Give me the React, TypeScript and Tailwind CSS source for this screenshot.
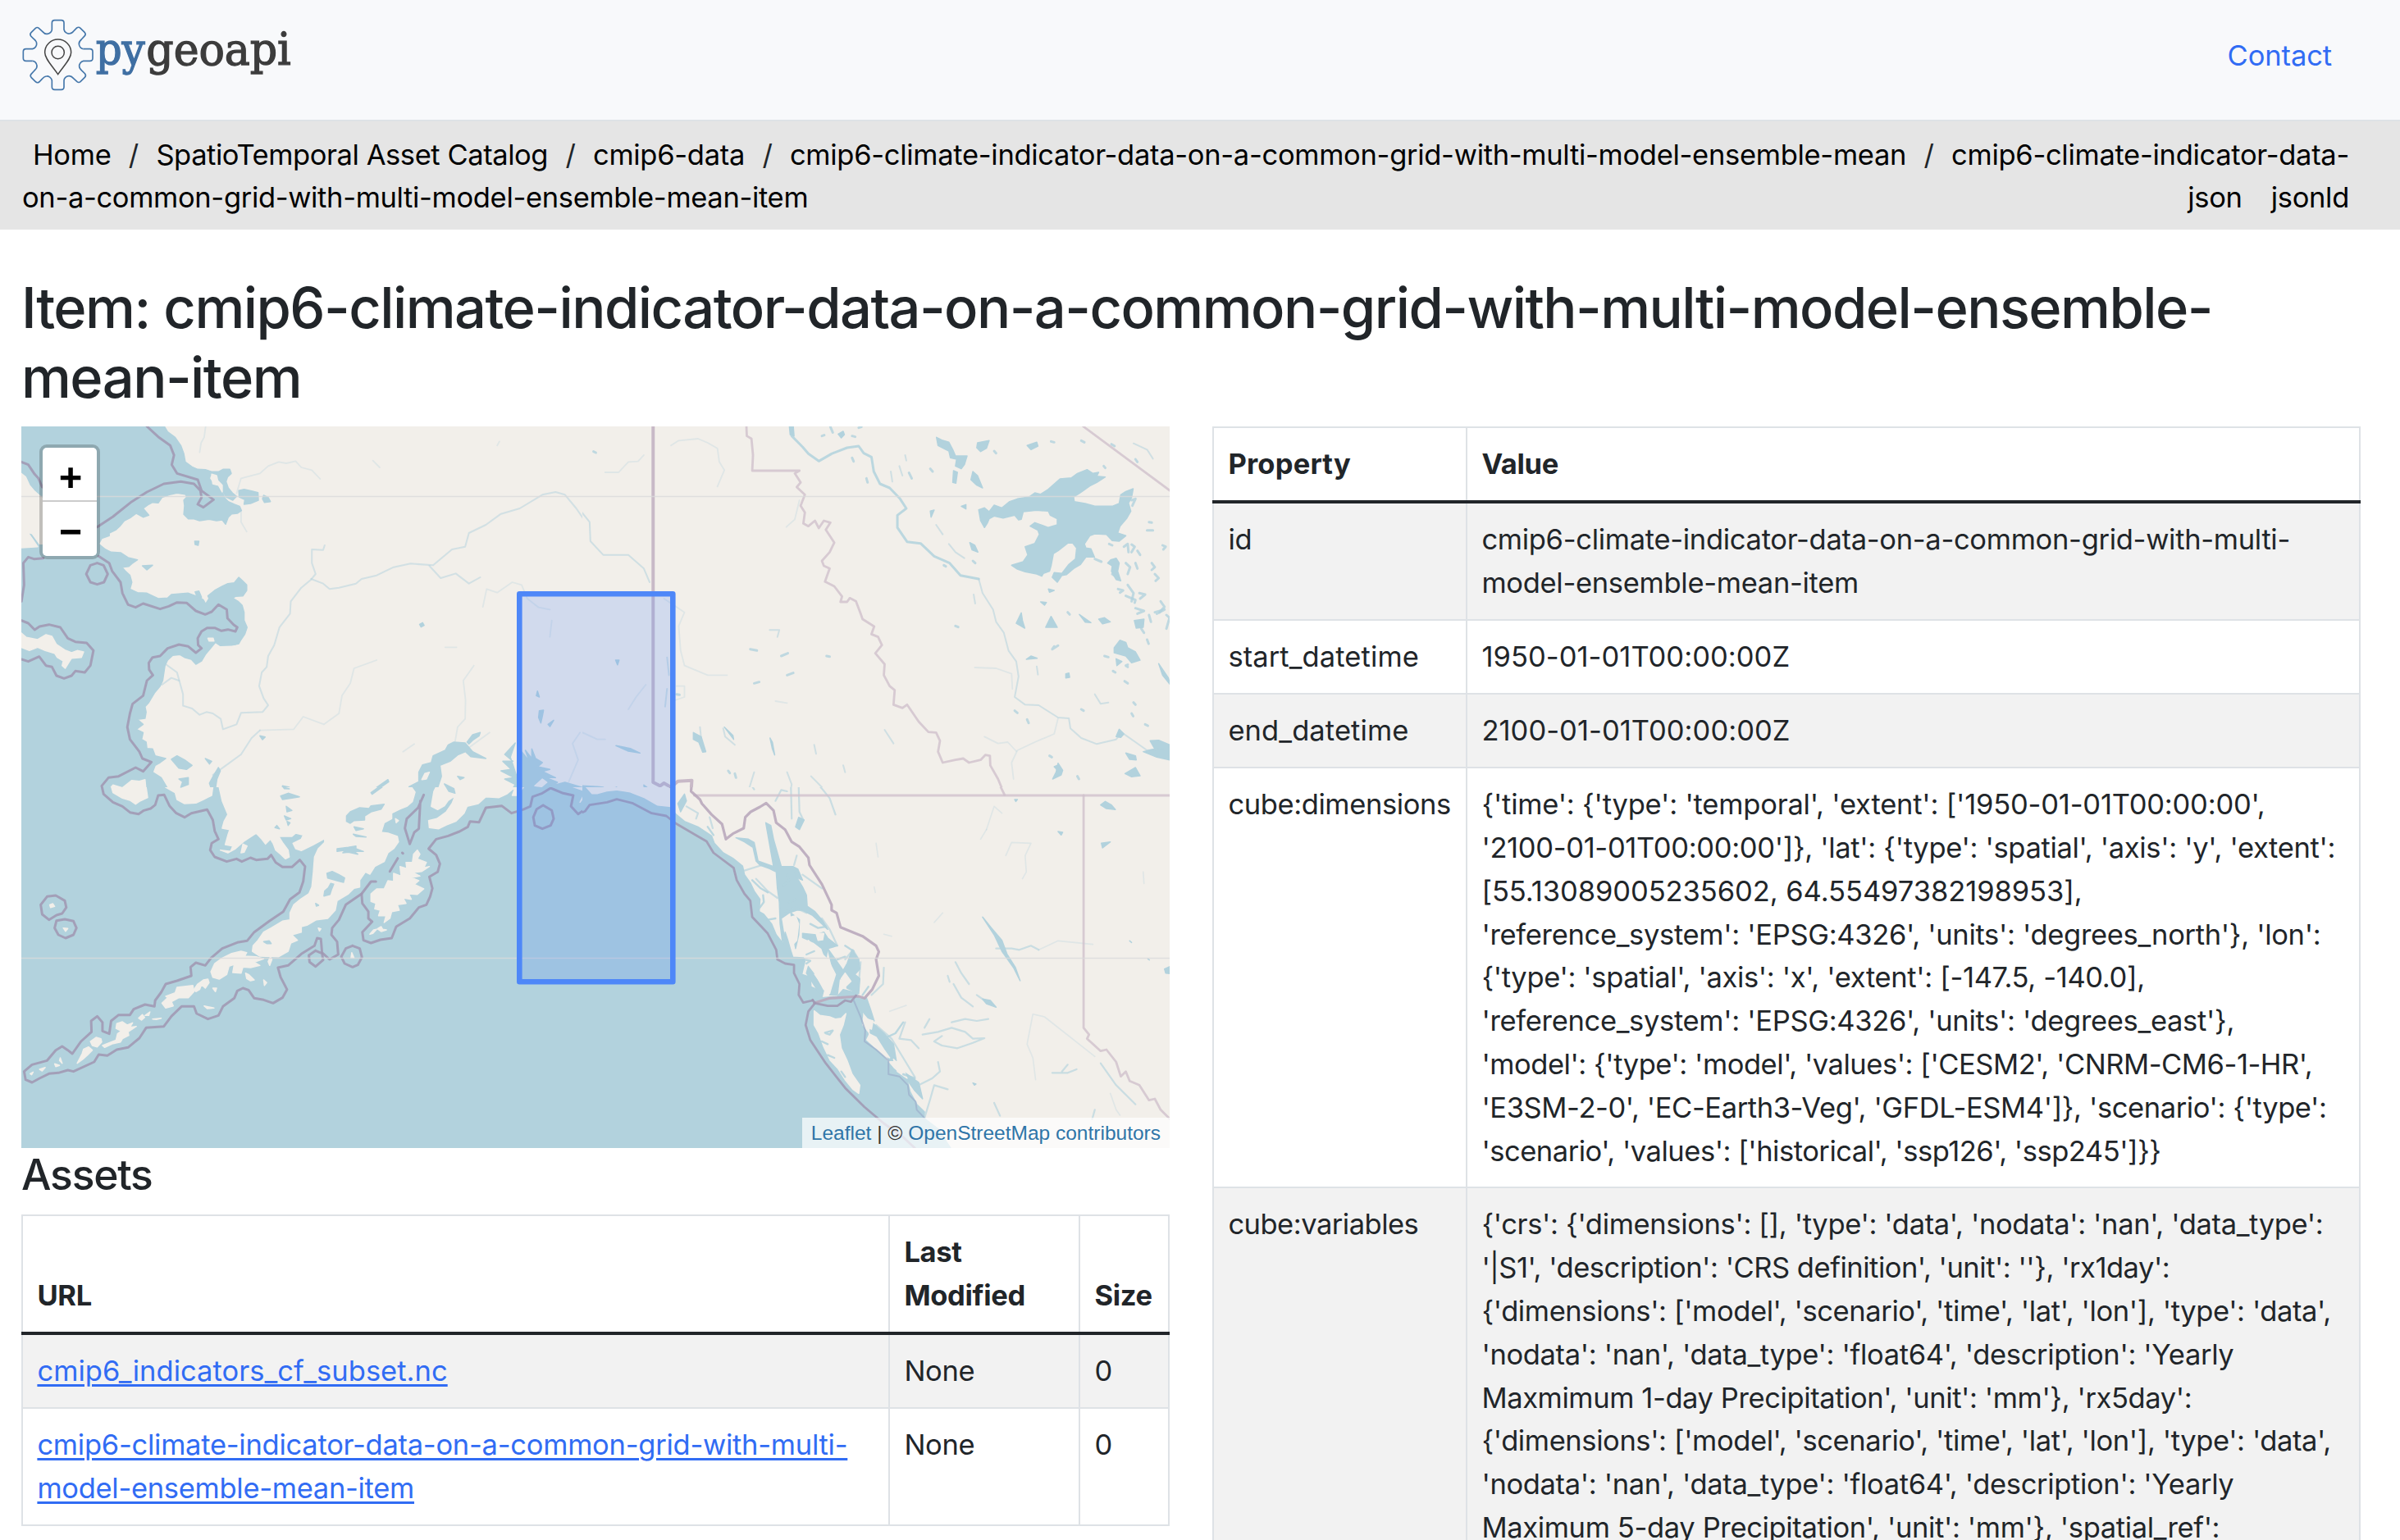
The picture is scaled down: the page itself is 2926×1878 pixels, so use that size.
import React from 'react';

const WATER = '#b2d2dd';
const LAND = '#f2efea';
const SEA_BORDER = '#a096b2';
const LAND_BORDER = '#cfc1cc';

function Shapes({ items, fill }: { items: string[]; fill: string }) {
  return (
    <>
      {items.map((points) => (
        <polygon key={points} points={points} fill={fill} stroke={fill} strokeWidth={1.5} strokeLinejoin="round" vectorEffect="non-scaling-stroke" />
      ))}
    </>
  );
}

function Lines({ items, color, width, opacity = 1 }: { items: string[]; color: string; width: number; opacity?: number }) {
  return (
    <>
      {items.map((points) => (
        <polyline key={points} points={points} fill="none" stroke={color} strokeWidth={width} strokeOpacity={opacity} strokeLinejoin="round" strokeLinecap="round" vectorEffect="non-scaling-stroke" />
      ))}
    </>
  );
}

const nwWater = [
  '50,50 432,50 445,80 465,100 480,130 488,160 492,190 510,208 525,217 545,218 562,226 580,226 592,217 610,217 614,232 604,245 600,262 606,285 618,305 628,316 618,330 600,318 590,290 580,278 572,245 560,235 556,250 566,272 580,280 590,300 597,322 606,335 622,345 636,352 641,368 630,378 615,380 606,392 599,418 590,402 575,405 555,400 530,405 515,398 500,398 488,382 490,350 488,330 496,318 492,308 470,304 450,310 430,320 420,340 405,338 395,345 380,360 395,385 380,392 362,378 345,395 330,405 318,425 308,438 290,450 290,460 270,470 262,490 280,510 295,520 320,522 340,540 365,548 350,562 342,572 324,575 332,588 345,605 350,630 345,655 365,668 390,670 420,690 445,688 455,675 480,672 500,670 530,685 540,695 546,710 555,690 552,680 570,660 590,645 605,635 622,632 634,612 644,625 655,640 655,660 645,680 625,682 618,688 632,700 643,715 648,740 648,770 656,795 650,820 640,840 634,855 615,860 585,862 572,850 560,870 545,895 535,918 520,930 508,912 490,905 478,895 458,898 445,915 438,935 432,990 425,1010 410,1035 395,1070 385,1085 388,1105 385,1128 365,1132 380,1150 362,1168 380,1180 376,1205 388,1215 390,1238 405,1240 412,1265 440,1275 425,1290 412,1300 405,1325 428,1345 445,1385 465,1400 480,1430 50,1440',
  '588,858 625,858 635,840 600,840',
  '634,295 648,290 668,296 685,302 686,330 665,342 648,345 650,328 635,318',
  '700,312 712,320 718,335 702,338 697,325',
  '378,570 405,568 390,585',
  '517,480 528,480 526,495 518,492',
  '518,665 528,662 535,685 525,690',
  '1205,1215 1235,1218 1255,1250 1290,1275 1250,1268 1236,1250 1215,1262 1195,1285 1168,1300 1172,1340 1160,1390 1140,1440 1098,1440 1105,1395 1086,1378 1112,1360 1112,1325 1122,1298 1145,1290 1150,1265 1182,1245 1190,1225',
  '1240,1215 1255,1188 1275,1180 1272,1192 1255,1208 1245,1222',
  '980,1400 1030,1352 1032,1360 985,1405',
  '1180,1368 1205,1385 1208,1402 1192,1395',
  '560,1440 562,1390 556,1365 566,1340 580,1308 585,1320 576,1350 572,1385 584,1440',
  '455,1278 470,1265 490,1280 510,1300 495,1315 475,1310',
  '475,1350 500,1345 500,1370 480,1380 485,1360',
  '545,1275 562,1285 556,1295',
  '745,1410 765,1402 795,1412 775,1420 750,1425',
  '750,1375 768,1380 765,1388 750,1383',
  '690,1192 704,1196 697,1206',
  '1114,784 1122,778 1126,788 1118,794',
  '1385,1395 1385,1250 1405,1285 1395,1245 1412,1275 1412,1240 1422,1275 1440,1290 1428,1305 1460,1315 1440,1322 1475,1345 1450,1345 1480,1362 1465,1375 1500,1362 1568,1390 1568,1440 1330,1440 1350,1410 1368,1370 1340,1350 1365,1345 1330,1320 1358,1315 1335,1285 1362,1285 1340,1260 1368,1218 1355,1270',
  '1427,1028 1432,1050 1424,1045',
  '1432,1100 1443,1098 1440,1120 1436,1145 1430,1125',
  '1455,1150 1470,1135 1460,1158',
  '1215,1340 1232,1345 1222,1352',
  '1265,1430 1300,1405 1325,1420 1350,1440',
];

const nwLand = [
  '50,225 68,245 78,275 90,295 110,320 125,335 125,490 105,490 85,452 74,448 90,480 100,500 50,505',
  '562,235 575,240 578,258 590,275 590,300 580,275 565,270',
  '50,808 70,832 100,840 122,822 138,828 150,858 172,878 190,888 205,880 222,885 216,905 190,908 182,925 173,945 165,935 168,918 152,905 145,890 120,880 100,868 78,880 50,865',
  '295,1380 300,1372 325,1382 350,1355 370,1358 385,1352 390,1425 365,1430 300,1410',
  '552,835 566,835 568,845 555,845',
  '1128,1330 1140,1325 1132,1350 1120,1352',
  '1420,1375 1440,1350 1452,1362 1438,1378',
];

const nwRivers = [
  '826,618 858,635 875,655 900,650 945,635 960,618 1000,605 1045,575 1090,562 1150,568 1200,510 1235,500 1245,450 1290,420 1330,380 1380,360 1440,310 1475,300 1500,310 1530,360 1560,420 1568,480',
  '862,495 858,512 828,510 828,560 838,600 826,620 800,650 772,700 770,745 742,795 728,860 712,900 708,940 695,960 688,1010 700,1055 712,1080 697,1105 640,1108 628,1150 592,1168 586,1130 565,1110 548,1105 530,1115 510,1092 486,1082 486,1040 470,960 440,930',
  '1140,570 1170,615 1210,598 1245,635 1275,612',
  '565,1335 600,1300 640,1260 668,1200 690,1172',
  '430,1005 455,980 475,990',
];
const nwFaintRivers = [
  '546,60 542,100 534,120 530,155',
  '628,305 640,250 690,232 712,205 740,190 760,195 785,187 800,210 828,220 850,252',
  '1282,720 1292,655 1320,668 1360,630 1385,640 1400,690 1430,722 1460,730',
  '690,1172 780,1168 805,1122 860,1150 900,1110 908,1045 930,1000 940,945 1000,915',
  '1208,1215 1215,1160 1235,1130 1236,1060 1230,990 1258,935',
  '1540,1180 1520,1220 1535,1280 1510,1360',
  '1465,770 1460,830',
  '1070,1250 1100,1222',
  '1245,1235 1300,1180',
  '990,185 1008,210',
  '1320,130 1326,115',
  '640,370 640,410 655,445',
  '1182,868 1212,868',
];

const nwBorders = [
  '390,60 420,98 452,130 462,165 456,200 470,232 525,255 535,295 567,328 540,356 525,345 535,320 532,295 515,270 480,262 435,270 390,300 350,335 300,390 258,428',
  '57,190 75,200 92,235 102,250 112,282',
  '57,700 64,640 62,560 75,538 90,545 115,542',
  '262,535 290,560 298,590 320,630 325,670 340,712 360,722 380,708 425,728 448,718 470,704 496,706 520,735 545,748 562,738 580,712 602,730 604,762 620,785 630,795 625,810 605,803 588,808 570,797 550,797 535,810 525,835 526,860 535,872 520,888 500,865 475,858 445,872 425,900 405,905 395,925 396,950 406,970 390,990 380,1045 352,1075 345,1110 338,1160 345,1205 370,1250 378,1275 402,1288 380,1322 360,1308 315,1340 288,1345 270,1375 275,1410 298,1440',
  '57,770 75,780 92,804 105,792 130,785 160,795 180,835 200,848 230,852 248,880 240,935 225,960 200,955 190,972 170,982 150,972 138,940 122,935 104,902 75,920 57,912',
  '258,560 275,568 286,600 276,630 258,638 240,630 229,600 240,568 258,560',
  '413,1440 420,1408 436,1408 446,1440',
  '1115,1440 1125,1405',
];

const neWater = [
  '1045,365 1060,358 1072,372 1085,348 1105,358 1125,335 1145,325 1175,318 1190,303 1205,308 1225,290 1255,252 1285,248 1300,232 1325,218 1340,232 1355,228 1350,242 1372,245 1350,265 1332,278 1318,292 1305,305 1290,318 1292,335 1320,342 1345,352 1390,352 1408,342 1412,310 1425,298 1444,288 1440,320 1432,340 1438,370 1428,395 1410,425 1404,450 1425,460 1408,480 1390,478 1375,455 1345,453 1332,460 1318,490 1322,505 1335,508 1344,538 1322,538 1308,565 1290,580 1272,602 1260,605 1248,630 1235,612 1240,595 1260,598 1278,565 1295,545 1298,505 1288,487 1275,487 1250,515 1238,525 1232,570 1228,590 1212,598 1208,608 1195,600 1165,592 1145,582 1130,568 1160,555 1172,530 1165,500 1190,488 1202,455 1198,440 1178,425 1190,412 1225,430 1248,420 1248,398 1230,385 1225,370 1195,367 1160,372 1155,400 1148,402 1138,385 1108,395 1085,388 1072,398 1068,412 1060,430 1050,405',
  '936,100 950,110 968,118 978,145 985,168 1015,168 1008,200 1000,215 985,205 988,180 972,175 968,150 940,130',
  '980,222 990,228 986,268 978,265',
  '1030,225 1042,240 1055,285 1040,275 1025,255',
  '1042,120 1072,112 1065,140 1050,152 1040,138',
  '1170,130 1195,118 1198,132 1180,145',
  '1386,548 1400,542 1408,560 1404,590 1412,625 1400,620 1388,590 1390,570 1378,560',
  '1395,870 1410,842 1425,850 1430,870 1450,885 1462,915 1440,925 1425,900 1395,888',
  '1232,755 1248,795 1218,795',
  '1155,742 1158,770 1164,798 1142,780',
  '1355,765 1370,760 1385,775 1365,782',
  '1305,748 1335,778 1320,776',
  '1447,770 1472,765 1470,795 1452,798',
  '1488,1210 1510,1208 1538,1225 1545,1282 1505,1270 1470,1250 1500,1240',
  '1400,1195 1408,1168 1420,1185 1412,1198',
  '1425,1255 1450,1265 1452,1280 1435,1278',
  '1423,1330 1450,1308 1462,1338 1440,1342',
  '1250,1292 1262,1318 1258,1335 1236,1350 1245,1325',
  '1510,928 1535,980 1540,1005 1520,970',
  '1240,1305 1248,1300 1250,1320',
  '1168,912 1180,900 1196,908',
  '1270,965 1278,962 1280,978 1270,980',
  '1205,702 1220,704 1215,714',
  '1225,655 1240,660 1228,667',
  '1400,910 1415,920 1402,935',
  '682,88 695,78 698,90 690,102',
  '556,60 566,60 568,95 558,90',
  '1022,485 1035,495 1043,520 1028,512',
  '920,370 930,366 922,392',
  '1000,352 1012,346 1012,362',
  '308,1180 328,1195 340,1250 332,1252 322,1215 308,1205',
  '506,1200 512,1215 518,1262 512,1240',
  '388,1160 410,1190 412,1205',
  '108,1228 145,1238 170,1255 140,1248',
  '107,915 116,915 112,932',
  '21,1375 60,1378 75,1380 85,1392 110,1380 21,1440',
  '180,1372 188,1380 182,1392',
];

const neMainRiver = [
  '560,60 562,95 590,135 605,160 632,187 665,160 705,138 735,132 748,158 768,172 774,225 790,270 815,285 842,325 858,360 835,385 835,430 860,482 895,488 930,535 970,560 998,605 1045,618',
];
const neRivers = [
  '1045,618 1055,670 1082,730 1090,775 1110,815 1122,880 1142,920 1148,975 1138,1050 1165,1078 1200,1080 1250,1125 1278,1128 1282,1165 1310,1200 1350,1222 1400,1205 1415,1180 1450,1215 1480,1245 1520,1240',
  '0,340 40,410 42,480 75,530 140,530 180,580 195,630',
  '240,905 245,970',
  '235,1085 240,1020',
  '325,1160 328,1200',
  '612,1340 640,1380 660,1420',
  '452,1385 465,1325',
  '550,1325 562,1370 555,1420',
  '385,1165 390,1195 415,1225',
  '1445,122 1480,145 1495,178',
  '968,490 985,520 1008,542',
  '935,420 952,455',
  '1345,1040 1360,1075 1380,1070',
  '1195,938 1198,968',
  '505,805 530,805 525,830',
  '818,225 822,262',
  '840,205 848,240',
  '855,165 858,185',
  '620,1225 625,1258',
  '695,1300 700,1325',
  '802,1170 825,1220',
  '1032,675 1036,708',
];
const neFaintRivers = [
  '1250,1128 1240,1185 1190,1215 1145,1245 1130,1290 1135,1350',
  '250,130 270,112 320,105 345,120 370,140 375,190 388,220 370,280',
  '80,228 115,228 140,190 165,188 180,165',
  '232,690 285,740 270,790 275,880 285,935 345,970 395,970',
  '265,1010 285,1010 285,1050 260,1062',
  '582,330 570,400 548,428',
  '1035,942 1090,945 1130,965 1132,1020',
  '1060,1195 1095,1220 1120,1215 1142,1248',
  '0,1200 22,1180 60,1205 80,1205',
  '520,1065 550,1072',
  '185,1005 160,1050 140,1095',
  '0,1230 15,1290 5,1330',
];

const nePockets = [
  '1440,330 1450,325 1442,350', '1420,500 1430,490 1432,520', '1440,492 1448,500 1440,520', '1425,560 1436,575 1430,600', '1450,560 1455,580',
  '1430,640 1445,670 1440,700', '1460,670 1475,675 1462,690', '1425,680 1450,695 1448,705', '1450,725 1472,735 1455,745', '1485,410 1492,412',
  '1480,440 1495,440', '1520,495 1528,500 1522,510', '1492,560 1500,575 1492,585', '1500,600 1510,615 1502,625', '1515,700 1525,720 1512,740',
  '1500,740 1525,730 1505,745', '1530,750 1538,760 1530,800', '1485,750 1490,775', '1465,800 1472,815', '1455,515 1462,530', '1405,655 1418,660 1410,668', '1382,490 1390,495',
  '1390,600 1402,612', '1345,545 1362,555', '1480,840 1484,855', '1430,940 1425,935 1430,932', '1392,955 1398,960', '1422,992 1430,1000', '1310,1095 1316,1100',
  '1440,1110 1444,1120', '1475,1150 1482,1155', '1170,1132 1174,1145', '1138,1100 1145,1108', '1228,1265 1234,1270', '1300,1340 1304,1350', '1445,1070 1450,1078',
  '718,175 722,188', '755,250 758,265', '865,230 872,250', '920,215 926,225', '640,95 646,92', '662,62 668,82', '718,95 726,98', '735,65 742,62',
  '1085,150 1090,158', '1232,115 1240,118', '1310,112 1318,118', '1450,180 1455,190', '1368,205 1372,212', '1388,125 1396,132',
  '455,875 472,880', '535,900 552,890', '550,970 566,962', '465,1000 478,995', '652,900 660,902', '985,790 992,794', '50,152 56,156',
  '1370,900 1380,904', '1240,865 1235,875 1250,862', '1275,740 1280,748', '1030,552 1036,560', '955,568 960,572', '265,1040 272,1042', '415,1330 418,1345', '398,1320 402,1328',
];

const neBorders = [
  '204,60 204,1362 222,1375 232,1365 250,1380 268,1358 304,1355 302,1395 325,1425 330,1440',
];
const neProvinces = [
  '445,60 446,95 458,105 462,165 460,222 582,222 570,232 585,265 575,282 596,310 585,350 596,375 592,415 605,425 622,405 632,432 645,405 662,412 650,438 672,485 660,520 640,552 645,570 660,580 648,628 672,645 692,682 688,702 705,702 712,688 728,700 740,745 745,765 775,792 768,820 785,830 795,860 778,890 802,930 800,970 815,1010 828,1025 825,1078 848,1090 860,1078 890,1140 915,1178 935,1180 945,1210 940,1250 952,1290 985,1280 1005,1275 1020,1290 1050,1280 1062,1262 1074,1265 1075,1300 1095,1350 1112,1408',
  '318,1409 1540,1409',
  '1316,1409 1316,1440',
  '1315,60 1540,296',
];

const swLand = [
  '400,-20 405,10 420,20 440,60 465,80 470,105 490,120 520,118 540,105 562,90 566,50 572,0',
  '580,-20 575,20 582,60 590,110 605,160 595,185 590,210 610,215 605,235 598,270 618,275 612,295 585,290 605,300 625,285 650,255 680,228 695,250 705,268 718,250 725,265 732,290 745,305 758,322 768,315 765,290 750,262 740,240 775,240 785,228 805,235 800,250 778,265 785,285 800,292 830,272 862,248 862,262 845,285 835,315 832,370 828,425 820,450 798,470 780,490 770,520 770,545 750,550 720,575 700,590 685,620 672,640 670,660 690,678 740,680 765,660 772,630 790,620 775,600 800,590 800,570 815,565 840,545 870,540 890,510 895,475 925,450 940,430 955,425 955,400 970,370 982,378 995,350 1020,332 1030,300 1045,285 1058,260 1055,240 1030,228 1012,225 1020,190 1040,175 1040,155 1062,140 1080,130 1095,112 1102,78 1090,55 1118,40 1125,-20',
  '1172,-20 1165,40 1152,75 1145,130 1162,142 1180,128 1190,108 1208,92 1200,120 1185,150 1160,175 1138,182 1140,208 1165,212 1185,198 1210,185 1232,155 1240,130 1270,120 1290,95 1325,98 1345,85 1368,60 1360,90 1372,90 1390,60 1395,30 1375,20 1385,-20',
  '1295,-20 1568,-20 1568,60 1540,115 1555,75 1525,60 1500,48 1480,30 1460,40 1440,38 1425,45 1418,30',
  '1108,290 1115,305 1108,322 1132,335 1125,355 1140,350 1120,368 1095,372 1115,385 1092,390 1112,402 1100,415 1125,432 1108,452 1085,450 1092,470 1070,465 1078,485 1055,490 1060,510 1040,515 1035,540 1020,555 1025,530 1005,530 1010,510 995,505 998,485 985,478 985,450 1000,432 1020,432 1030,402 1045,405 1045,375 1065,385 1062,350 1080,358 1078,335 1095,335 1098,305',
  '295,55 310,62 325,62 335,48 352,34 365,40 382,32 388,60 392,98 370,112 360,122 345,108 325,100 300,80',
  '565,755 560,735 570,705 590,685 615,668 640,660 655,665 650,678 680,680 700,688 675,700 690,712 665,720 645,718 640,740 618,738 622,708 608,715 602,745 582,762',
  '430,850 445,830 440,825 465,812 470,792 512,785 515,808 500,830 475,830 455,845 460,860 440,868',
  '310,925 325,918 338,930 352,922 345,938 362,935 340,955 342,968 325,980 320,992 300,998 278,1012 272,1005 290,995 308,985 312,962 322,952 308,942',
  '255,975 268,980 270,992 258,1010 245,1005 240,990',
  '235,1010 245,1022 232,1040 220,1055 205,1070 218,1035 222,1018',
  '368,905 378,892 384,902 376,912',
  '515,800 525,780 540,765 552,762 555,775 545,795 535,782 530,800 520,808',
  '645,268 656,275 648,298 640,300',
  '652,740 660,745 675,765 665,768 655,760',
  '385,895 398,882 395,895',
  '982,598 992,582 1000,580 990,595',
  '1002,578 1012,570 1016,580 1026,582 1012,588',
  '132,490 140,486 145,496 134,500',
  '168,575 180,577 174,587',
  '934,665 940,685 932,685',
  '718,680 722,690 716,712 712,698',
  '1050,175 1058,182 1052,190',
  '105,1092 120,1085 112,1098',
  '542,860 568,868 550,870',
  '845,575 852,578 848,586',
  '80,1108 88,1102 84,1112',
  '145,1072 158,1078 148,1082', '158,1060 165,1070 160,1050',
  '405,908 428,905 415,910', '565,795 575,795 572,808', '700,765 708,775 702,785',
];
const swWater = [
  '920,165 930,150 955,135 980,138 985,128 1020,122 1012,140 985,150 968,165 968,180 940,182 930,192 920,185',
  '868,375 882,368 900,380 915,392 912,408 895,402 870,392',
  '878,412 886,415 880,435 876,452 860,458 862,440 872,428',
  '895,285 925,280 945,275 945,285 965,295 940,295 950,305 925,298 910,300 918,290 895,295',
  '940,205 965,212 945,218', '938,232 972,242 945,240',
  '985,80 1030,35 1032,42 988,86', '1180,48 1205,65 1208,82 1192,75', '745,92 765,82 795,95 775,100 750,105',
  '752,60 768,66 755,65', '760,130 775,145 762,150', '755,165 772,175 760,180', '762,185 770,190 765,200', '735,200 742,212 730,208', '475,30 500,25 500,50 480,60',
  '1210,18 1235,25 1225,30', '838,485 846,492 840,495', '700,625 715,622 720,632 708,632', '1120,15 1138,8 1125,40',
];
const swBorders = [
  '383,0 320,15 290,28 270,55 275,85 300,115 325,130 345,152 368,158 382,145 400,138 412,125 420,90 436,88 450,128 468,155 490,170 508,155 550,142 565,180 570,220 580,250 562,265 558,290 570,315 602,332 628,322 642,332 665,318 680,326 710,322 720,308 732,335 750,352 775,352 796,326 810,350 805,405 795,445 770,470 752,515 715,550 675,590 656,622 630,628 590,650 560,685 545,712 520,702 506,718 508,750 470,768 440,780 428,810 412,840 410,862 385,855 355,872 345,893 315,893 295,915 290,962 272,952 272,920 258,898 242,915 243,955 215,990 192,1035 180,1022 165,1008 148,1022 125,1060 85,1075 64,1100 68,1130 85,1140 105,1125 130,1108 155,1105 180,1095 195,1100 250,1065 262,1038 285,1042 310,1020 340,1012 370,978 388,940 435,935 455,898 482,862 515,862 522,888 552,908 580,895 592,862 622,832 630,805 645,795 660,802 675,832 700,838 725,850 750,830 762,800 745,755 738,720 765,712 800,670 835,640 842,612 852,615 855,665 875,690 898,672 895,625 880,600 882,575 900,545 918,490 960,450 985,405 998,405',
  '960,450 962,485 978,515 978,540 988,552 962,590 965,620 985,630 1010,618 1040,612 1052,570 1088,540 1112,500 1132,490 1142,460 1148,430 1140,388 1162,370 1168,340 1158,308 1138,285 1158,250 1190,238 1220,222 1242,205 1248,185 1272,188 1290,135 1332,128 1358,155 1388,142 1408,130 1414,95 1440,82 1462,63 1495,82 1522,90 1516,130 1535,158 1568,128',
  '1125,88 1110,135 1080,175 1075,210 1088,268 1100,225 1112,212 1116,110',
  '1068,300 1070,302', '1056,320 1035,368',
  '125,460 148,456 172,475 176,500 165,522 150,528 130,545 112,525 108,490 125,460',
  '172,543 195,550 203,575 195,600 174,612 155,600 145,575 150,548 172,543',
  '838,658 855,668 858,692 838,716 822,700 820,675 838,658',
  '936,640 955,650 961,682 950,710 936,718 915,705 906,680 918,650 936,640',
  '1442,126 1465,145 1470,175 1462,200 1440,212 1420,200 1416,170 1425,140 1442,126',
];

const seWater = [
  '15,40 45,88 60,88 85,78 110,74 145,82 180,102 215,130 250,135 262,158 285,185 320,205 355,238 362,265 385,300 410,320 435,348 440,380 455,410 465,440 480,470 478,515 490,525 510,560 522,600 540,632 545,590 552,620 560,660 565,682 598,685 588,745 610,755 612,790 628,800 640,830 680,825 695,800 730,812 742,850 745,892 742,930 760,962 752,985 795,1040 825,1090 860,1130 868,1175 885,1220 905,1248 903,1270 940,1310 1000,1440 15,1440',
  '495,190 508,200 515,250 525,300 535,350 565,350 575,390 590,425 600,455 602,495 622,515 640,545 655,580 640,560 615,528 590,510 575,510 555,520 535,540 542,600 538,625 532,560 530,480 525,430 522,370 505,358 480,345 470,330 462,280 440,260 418,245 450,250 465,262 475,330 515,350 505,270',
  '565,350 578,360 590,400 575,390',
  '560,520 582,545 580,600 572,650 566,600',
  '590,595 625,600 645,590 655,612 680,640 655,650 650,690 640,650 620,628 590,610',
  '655,650 680,700 695,730 705,705 718,655 735,690 738,725 725,745 738,760 735,815 705,795 700,765 685,760 680,820 660,820 672,745',
  '605,715 625,720 618,745 645,800 640,828 600,740',
  '735,835 755,830 765,870 775,915 760,905 745,880',
  '765,915 800,960 825,1000 832,1060 815,1060 790,1000 765,960',
  '840,1090 870,1120 890,1140 900,1200 880,1170',
  '268,120 285,85 290,110 275,150',
  '1055,535 1078,575 1105,620 1118,670 1140,720 1152,768 1135,720 1105,660 1085,600',
  '1372,112 1388,125 1398,142 1375,138 1360,125', '1362,265 1385,260 1365,282', '1525,725 1540,715 1540,742 1528,740', '1250,222 1262,225 1258,235',
  '1138,105 1145,105 1141,112', '1240,15 1262,0 1255,25 1236,30', '1423,10 1462,18 1440,24',
  '1055,835 1075,840 1090,865 1065,852', '580,170 594,180 582,215 572,205', '1482,688 1486,692', '1435,622 1440,628', '1030,1142 1038,1146 1034,1150',
];
const seLand = [
  '620,878 635,895 660,900 675,908 690,905 702,888 695,930 685,965 690,1015 705,1060 718,1110 738,1150 735,1180 720,1165 700,1130 682,1090 662,1060 645,1010 632,960 620,930',
  '560,535 572,530 580,560 575,620 562,640 555,580',
  '588,655 605,620 625,650 655,690 675,745 665,790 660,815 645,800 622,740 600,700',
  '625,595 645,595 642,618 630,620',
  '690,760 700,740 715,770 700,790',
  '748,905 772,915 768,945 755,935',
  '762,962 780,975 800,1020 815,1050 795,1035 770,1000',
  '825,1055 850,1090 860,1125 835,1100',
];
const seInlets = [
  '592,690 610,695 600,705', '620,660 600,672', '648,958 668,950 660,965 650,960', '640,990 655,1000', '655,1040 672,1050', '690,1100 700,1120',
  '480,500 490,480 488,455', '500,545 520,540', '460,400 482,430 500,445', '540,420 555,400 550,380', '555,480 572,470', '610,560 630,575 650,570',
  '700,640 722,660', '680,690 700,680', '745,820 760,790', '850,1110 880,1125', '800,980 830,960 850,920', '360,235 345,205',
];
const seBorders = [
  '204,40 222,55 232,45 250,60 268,38 304,35 302,75 325,105 330,120 355,160 382,195 392,250 410,230 438,210 442,170 456,150 480,132 496,118 515,145 522,190 545,215 562,260 582,278 605,318 608,345 640,415 665,490 665,510 678,520 688,572 745,605 780,640 787,662 780,690 787,750 770,800 750,832 735,825 660,832 620,850',
];
const seMaritime = [
  '0,152 12,158 28,148 40,125 85,115 110,104 150,118 200,155 238,165 262,192 320,240 342,258 360,300 412,355 420,400 440,450 455,475 460,535 500,595 522,655 525,690 545,705 568,710 568,740 582,780 580,820 592,848 616,840',
  '616,838 622,850 655,860 680,860 700,840 715,845 728,822',
  '622,850 605,880 598,930 610,985 650,1070 700,1160 750,1230 800,1290 850,1340 880,1380',
];
const seFaint = ['722,840 740,900 752,950 750,990 780,1020 812,1060 812,1110 840,1118 862,1150 865,1185 882,1210 885,1240 905,1270'];
const seProvinces = [
  '310,90 1540,90',
  '1078,0 1095,40 1112,88',
  '1316,90 1316,940 1330,965 1325,980 1360,1025 1375,1020 1400,1065 1412,1118 1425,1100 1435,1135 1460,1150 1485,1205 1500,1200 1515,1240 1540,1275',
];
const seRivers = [
  '612,22 640,65 660,100 675,160', '555,0 560,60 562,175', '580,60 582,150 592,180', '458,0 452,40 465,68', '520,110 535,70 550,75',
  '1090,650 1130,650 1150,655 1180,640 1200,655', '985,700 1000,740 1020,780', '980,780 1000,830 1030,862', '965,750 970,772',
  '900,965 940,955 975,940 1010,955 1030,980 1060,978 1030,995 990,1015 950,1005 930,990 950,970', '975,920 1010,908 1040,915 1070,908',
  '1040,820 1060,840', '800,720 798,780 768,820', '855,920 840,980 870,985 890,1015', '940,1065 945,1100 925,1125 890,1150', '905,1270 920,1200 930,1150 965,1165',
  '780,930 820,980 850,1050 880,1120', '1235,1105 1275,1105 1298,1092', '1260,1100 1275,1075', '1360,1070 1400,1150 1450,1220', '1085,1215 1100,1262', '1345,1240 1338,1275',
  '575,310 568,345', '470,395 500,440 525,465', '440,365 485,345', '600,520 570,500 545,515', '735,690 720,655 700,690', '290,130 320,155 315,175', '350,170 358,210', '905,940 918,908',
  '640,540 660,580 680,640', '590,380 640,430', '740,700 735,780',
];
const seFaintRivers = [
  '1065,215 1085,130 1105,155', '1050,250 1065,215', '1115,310 1130,262 1180,265 1165,310 1168,370 1158,395', '1200,655 1250,622 1340,635', '1192,1130 1185,1050 1170,1000 1185,890 1215,900 1345,1045', '800,598 820,605', '815,880 858,858',
  '780,265 785,315', '775,425 778,445', '930,555 952,520', '1385,1180 1400,1240 1410,1260', '1470,370 1472,412',
];

function MapTile({ box, viewBox, children }: { box: [number, number, number, number]; viewBox: string; children: React.ReactNode }) {
  return (
    <svg x={box[0]} y={box[1]} width={box[2]} height={box[3]} viewBox={viewBox} preserveAspectRatio="none">
      {children}
    </svg>
  );
}

function MapDrawing() {
  return (
    <svg className="block h-[880px] w-[1400px]" viewBox="0 0 1400 880">
      <rect width="1400" height="880" fill={LAND} />
      <rect y="440" width="684" height="440" fill={WATER} />
      <MapTile box={[0, 0, 684, 440]} viewBox="56.6 60 1489.6 1320">
        <Shapes items={nwWater} fill={WATER} />
        <Shapes items={nwLand} fill={LAND} />
        <Lines items={nwRivers} color={WATER} width={2} opacity={0.5} />
        <Lines items={nwFaintRivers} color={WATER} width={1.8} opacity={0.3} />
        <Lines items={nwBorders} color={SEA_BORDER} width={3} opacity={0.85} />
      </MapTile>
      <MapTile box={[684, 0, 716, 440]} viewBox="21.2 60 1517.1 1320">
        <Shapes items={neWater} fill={WATER} />
        <Lines items={nePockets} color={WATER} width={3} opacity={0.8} />
        <Lines items={neMainRiver} color={WATER} width={3} opacity={0.85} />
        <Lines items={neRivers} color={WATER} width={2} opacity={0.55} />
        <Lines items={neFaintRivers} color={WATER} width={1.8} opacity={0.3} />
        <Lines items={neProvinces} color={LAND_BORDER} width={2.8} opacity={0.8} />
        <Lines items={neBorders} color="#c3b3c3" width={4} opacity={0.9} />
      </MapTile>
      <MapTile box={[0, 440, 684, 440]} viewBox="56.6 60 1489.6 1320">
        <Shapes items={swLand} fill={LAND} />
        <Shapes items={swWater} fill={WATER} />
        <Lines items={swBorders} color={SEA_BORDER} width={3} opacity={0.85} />
      </MapTile>
      <MapTile box={[684, 440, 716, 440]} viewBox="21.2 60 1517.1 1320">
        <Shapes items={seWater} fill={WATER} />
        <Shapes items={seLand} fill={LAND} />
        <Lines items={seInlets} color={WATER} width={2.4} opacity={0.85} />
        <Lines items={seRivers} color={WATER} width={2.2} opacity={0.65} />
        <Lines items={seFaintRivers} color={WATER} width={1.6} opacity={0.3} />
        <Lines items={seProvinces} color={LAND_BORDER} width={2.8} opacity={0.8} />
        <Lines items={seBorders} color="#b9a8bd" width={3.2} opacity={0.9} />
        <Lines items={seMaritime} color={SEA_BORDER} width={2.8} opacity={0.85} />
        <Lines items={seFaint} color="#9fb3cd" width={2} opacity={0.8} />
      </MapTile>
      <path d="M0 85.5H1400M0 648.5H1400" stroke="#d9dadb" strokeWidth="1.4" strokeOpacity="0.8" />
      <rect x="607.3" y="204.3" width="187" height="473" fill="#4e87f8" fillOpacity="0.2" stroke="#4e87f8" strokeWidth="6.6" strokeLinejoin="round" />
    </svg>
  );
}

function Logo() {
  const tooth =
    'M190 108V84Q190 74 200 74H224Q234 74 234 84V108C236 118 246 124 254 123C262 123 266 118 271 112L281 102Q288 97 294 103L310 119Q315 125 310 131L298 144C291 150 288 156 289 162C290 172 298 179 305 179';
  return (
    <svg className="block h-[130px] w-[380px]" viewBox="0 0 1140 390">
      <g fill="none" stroke="#4678ab" strokeWidth="5">
        <path d={tooth} />
        <path d={tooth} transform="rotate(90 212 201)" />
        <path d={tooth} transform="rotate(180 212 201)" />
        <path d={tooth} transform="rotate(270 212 201)" />
      </g>
      <g fill="none" stroke="#454545" strokeWidth="4.5">
        <path d="M212 272C190 240 164 215 164 192A48 48 0 0 1 260 192C260 215 234 240 212 272Z" />
        <circle cx="212" cy="192" r="23" />
      </g>
      <g fontFamily="'DejaVu Serif', serif" fontSize="164" strokeWidth="4">
        <text x="350" y="237" textLength="180" lengthAdjust="spacingAndGlyphs" fill="#3f6fa3" stroke="#3f6fa3">py</text>
        <text x="535" y="237" textLength="529" lengthAdjust="spacingAndGlyphs" fill="#3c3c3c" stroke="#3c3c3c">geoapi</text>
      </g>
    </svg>
  );
}

const TH = 'border-2 border-[#dee2e6] border-b-4 border-b-[#212529] pr-[18px] pl-[17.4px] pt-[18px] pb-[17.2px] text-left align-bottom font-bold';
const TD = 'border-2 border-[#dee2e6] pr-[18px] pl-[17.4px] pt-[18.4px] pb-[16.8px] align-top';

type Line = { text: string; tracking?: string };

const properties: { name: Line; lines: Line[] }[] = [
  {
    name: { text: 'id' },
    lines: [{ text: 'cmip6-climate-indicator-data-on-a-common-grid-with-multi-' }, { text: 'model-ensemble-mean-item' }],
  },
  { name: { text: 'start_datetime', tracking: 'tracking-[0.1px]' }, lines: [{ text: '1950-01-01T00:00:00Z', tracking: 'tracking-[0.05px]' }] },
  { name: { text: 'end_datetime', tracking: 'tracking-[0.1px]' }, lines: [{ text: '2100-01-01T00:00:00Z', tracking: 'tracking-[0.05px]' }] },
  {
    name: { text: 'cube:dimensions', tracking: 'tracking-[-0.4px]' },
    lines: [
      { text: "{'time': {'type': 'temporal', 'extent': ['1950-01-01T00:00:00',", tracking: 'tracking-[-0.2px]' },
      { text: "'2100-01-01T00:00:00']}, 'lat': {'type': 'spatial', 'axis': 'y', 'extent':", tracking: 'tracking-[-0.33px]' },
      { text: '[55.13089005235602, 64.55497382198953],', tracking: 'tracking-[-0.06px]' },
      { text: "'reference_system': 'EPSG:4326', 'units': 'degrees_north'}, 'lon':", tracking: 'tracking-[-0.32px]' },
      { text: "{'type': 'spatial', 'axis': 'x', 'extent': [-147.5, -140.0],", tracking: 'tracking-[-0.35px]' },
      { text: "'reference_system': 'EPSG:4326', 'units': 'degrees_east'},", tracking: 'tracking-[-0.32px]' },
      { text: "'model': {'type': 'model', 'values': ['CESM2', 'CNRM-CM6-1-HR',", tracking: 'tracking-[-0.46px]' },
      { text: "'E3SM-2-0', 'EC-Earth3-Veg', 'GFDL-ESM4']}, 'scenario': {'type':", tracking: 'tracking-[-0.4px]' },
      { text: "'scenario', 'values': ['historical', 'ssp126', 'ssp245']}}", tracking: 'tracking-[-0.48px]' },
    ],
  },
  {
    name: { text: 'cube:variables', tracking: 'tracking-[-0.5px]' },
    lines: [
      { text: "{'crs': {'dimensions': [], 'type': 'data', 'nodata': 'nan', 'data_type':", tracking: 'tracking-[-0.35px]' },
      { text: "'|S1', 'description': 'CRS definition', 'unit': ''}, 'rx1day':", tracking: 'tracking-[-0.48px]' },
      { text: "{'dimensions': ['model', 'scenario', 'time', 'lat', 'lon'], 'type': 'data',", tracking: 'tracking-[-0.4px]' },
      { text: "'nodata': 'nan', 'data_type': 'float64', 'description': 'Yearly", tracking: 'tracking-[-0.34px]' },
      { text: "Maxmimum 1-day Precipitation', 'unit': 'mm'}, 'rx5day':", tracking: 'tracking-[-0.4px]' },
      { text: "{'dimensions': ['model', 'scenario', 'time', 'lat', 'lon'], 'type': 'data',", tracking: 'tracking-[-0.4px]' },
      { text: "'nodata': 'nan', 'data_type': 'float64', 'description': 'Yearly", tracking: 'tracking-[-0.34px]' },
      { text: "Maximum 5-day Precipitation', 'unit': 'mm'}, 'spatial_ref':", tracking: 'tracking-[-0.35px]' },
    ],
  },
];

const assets: { lines: Line[] }[] = [
  { lines: [{ text: 'cmip6_indicators_cf_subset.nc', tracking: 'tracking-[0.03px]' }] },
  {
    lines: [
      { text: 'cmip6-climate-indicator-data-on-a-common-grid-with-multi-', tracking: 'tracking-[-0.26px]' },
      { text: 'model-ensemble-mean-item' },
    ],
  },
];

const crumbs: Line[] = [
  { text: 'Home' },
  { text: 'SpatioTemporal Asset Catalog', tracking: 'tracking-[-0.43px]' },
  { text: 'cmip6-data' },
  { text: 'cmip6-climate-indicator-data-on-a-common-grid-with-multi-model-ensemble-mean' },
];

export default function App() {
  return (
    <div className="h-[1878px] w-[2926px] overflow-hidden bg-white font-['Inter',sans-serif] text-[34.5px] leading-[52.8px] tracking-[-0.3px] whitespace-nowrap text-[#212529]">
      <header className="flex h-[148px] items-start justify-between border-b-2 border-[#dee2e6] bg-[#f8f9fb] pr-[83px]">
        <Logo />
        <a className="mt-[42px] tracking-[-0.1px] text-[#316cf4]">Contact</a>
      </header>

      <nav className="h-[132px] bg-[#e5e5e5] pt-[14.6px] pr-[62px] pl-[27px] text-black">
        <div className="flex pl-[13px]">
          {crumbs.map((crumb) => (
            <React.Fragment key={crumb.text}>
              <a className={crumb.tracking}>{crumb.text}</a>
              <span className="w-[55.4px] text-center text-[#212529]">/</span>
            </React.Fragment>
          ))}
          <a>cmip6-climate-indicator-data-</a>
        </div>
        <div className="flex justify-between">
          <a className="tracking-[-0.34px]">on-a-common-grid-with-multi-model-ensemble-mean-item</a>
          <div className="flex gap-[35px]">
            <a>json</a>
            <a>jsonld</a>
          </div>
        </div>
      </nav>

      <main className="px-[26px] pt-[54px]">
        <h1 className="mb-[17px] text-[68.6px] leading-[84.5px] font-medium tracking-[-1.55px]">
          <span className="block">Item: cmip6-climate-indicator-data-on-a-common-grid-with-multi-model-ensemble-</span>
          <span className="block">mean-item</span>
        </h1>

        <div className="flex items-start gap-[52px]">
          <section className="w-[1400px]">
            <div className="relative h-[880px] overflow-hidden">
              <MapDrawing />
              <div className="absolute top-[22px] left-[22px] flex w-[74px] flex-col overflow-hidden rounded-[9px] border-4 border-black/20 bg-clip-padding font-semibold text-black">
                <button className="h-[66px] rounded-t-[4px] border-b-2 border-[#ccc] bg-white pl-[2px] text-[50px] leading-[66px]">+</button>
                <button className="h-[66px] rounded-b-[4px] bg-white pl-[2px] text-[50px] leading-[66px]">−</button>
              </div>
              <div className="absolute right-0 bottom-0 h-[37px] bg-white/70 px-[11px] font-['Liberation_Sans',sans-serif] text-[24.5px] leading-[38px] tracking-normal text-[#333]">
                <a className="text-[#2f75a8]">Leaflet</a> | © <a className="text-[#2f75a8]">OpenStreetMap contributors</a>
              </div>
            </div>

            <h3 className="mb-[17px] pt-[1px] text-[51.5px] leading-[63px] font-medium tracking-[-1.2px]">Assets</h3>
            <table className="w-full table-fixed border-collapse">
              <colgroup>
                <col className="w-[1057px]" />
                <col className="w-[232px]" />
                <col />
              </colgroup>
              <thead>
                <tr>
                  <th className={TH}>URL</th>
                  <th className={TH}>Last<br />Modified</th>
                  <th className={TH}>Size</th>
                </tr>
              </thead>
              <tbody>
                {assets.map((asset) => (
                  <tr key={asset.lines[0].text} className="odd:bg-[#f2f2f2]">
                    <td className={TD}>
                      {asset.lines.map((line) => (
                        <div key={line.text} className={line.tracking}>
                          <a className="text-[#316cf4] underline decoration-[3px] underline-offset-[4px]">{line.text}</a>
                        </div>
                      ))}
                    </td>
                    <td className={TD}>None</td>
                    <td className={TD}>0</td>
                  </tr>
                ))}
              </tbody>
            </table>
          </section>

          <table className="w-[1400px] table-fixed border-collapse">
            <colgroup>
              <col className="w-[309px]" />
              <col />
            </colgroup>
            <thead>
              <tr>
                <th className={TH}><span className="tracking-[0.2px]">Property</span></th>
                <th className={TH}>Value</th>
              </tr>
            </thead>
            <tbody>
              {properties.map((property) => (
                <tr key={property.name.text} className="odd:bg-[#f2f2f2]">
                  <td className={TD}><span className={property.name.tracking}>{property.name.text}</span></td>
                  <td className={TD}>
                    {property.lines.map((line, i) => (
                      <div key={i} className={line.tracking}>{line.text}</div>
                    ))}
                  </td>
                </tr>
              ))}
            </tbody>
          </table>
        </div>
      </main>
    </div>
  );
}
